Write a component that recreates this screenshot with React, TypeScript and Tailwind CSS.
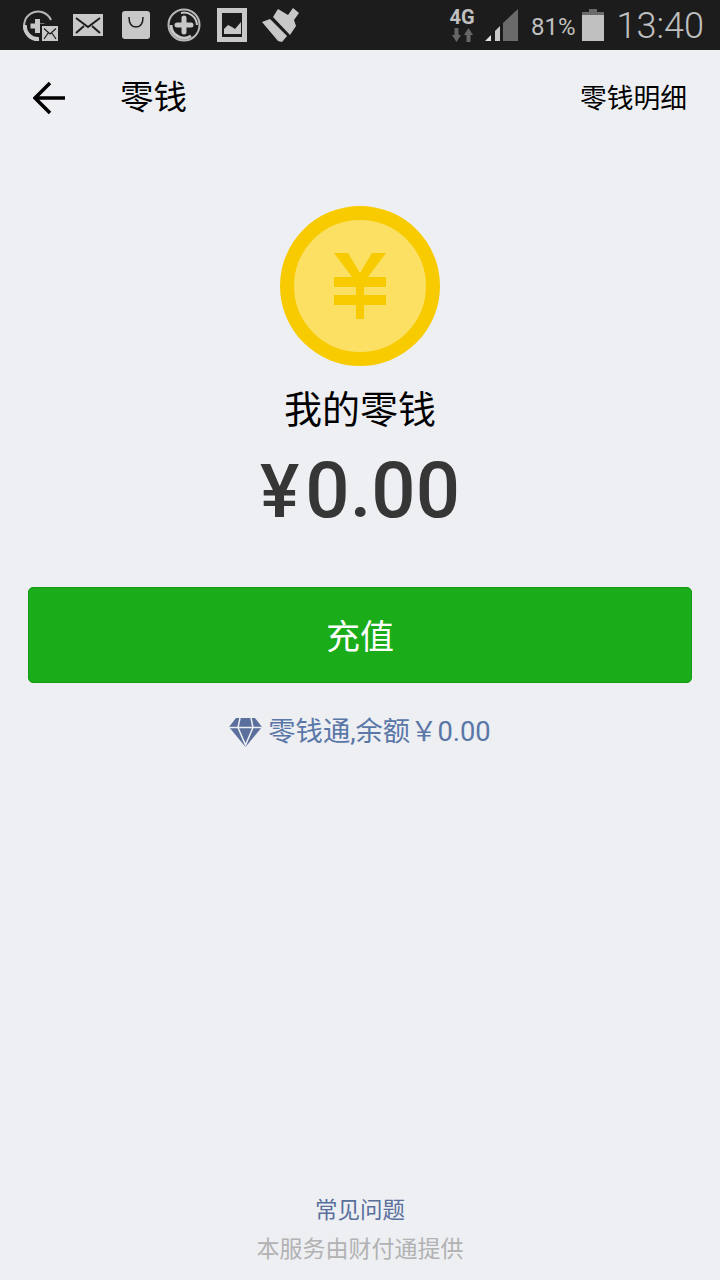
const cjk = "font-['Roboto','Noto_Sans_CJK_SC',sans-serif]"

function StatusIcons() {
 return (
  <div className="flex items-center">
   <svg className="ml-[22px] h-[34px] w-[37px]" viewBox="0 0 37 34">
    <path d="M5 26A14 14 0 1 1 29 12" fill="none" stroke="#b8b8b8" strokeWidth="2" />
    <path d="M3 17a13 13 0 0 0 14 14" fill="none" stroke="#c8c8c8" strokeWidth="4" />
    <path d="M15.500 11v14M8.500 18h14" fill="none" stroke="#c8c8c8" strokeWidth="5" />
    <rect x="18" y="16" width="19" height="18" fill="#1c1c1c" />
    <rect x="20" y="18" width="16" height="15" fill="#c8c8c8" />
    <path d="M22 20.500l6 5.500 6-5.500M22 31l4.500-6.500M34 31l-4.500-6.500" fill="none" stroke="#1c1c1c" strokeWidth="1.200" />
   </svg>
   <svg className="ml-[14px] h-[22px] w-[30px]" viewBox="0 0 30 22">
    <rect width="30" height="22" fill="#c8c8c8" />
    <path d="M3 4l12 9 12-9M3 19l8-7M27 19l-8-7" fill="none" stroke="#1c1c1c" strokeWidth="2" />
   </svg>
   <svg className="ml-[19px] h-[28px] w-[28px]" viewBox="0 0 28 28">
    <path d="M3 0h22a3 3 0 0 1 3 3v22a3 3 0 0 1-3 3H3a3 3 0 0 1-3-3V3a3 3 0 0 1 3-3z" fill="#c8c8c8" />
    <path d="M7 6c0 7 3 10 7 10s7-3 7-10" fill="none" stroke="#1c1c1c" strokeWidth="1.500" />
   </svg>
   <svg className="ml-[17px] h-[34px] w-[34px]" viewBox="0 0 34 34">
    <circle cx="17" cy="17" r="15.500" fill="none" stroke="#b8b8b8" strokeWidth="2" />
    <path d="M4 17a13 13 0 0 0 20 11" fill="none" stroke="#c8c8c8" strokeWidth="3" />
    <path d="M30 17A13 13 0 0 0 14 5" fill="none" stroke="#c8c8c8" strokeWidth="2" />
    <path d="M17 10v14M10 17h14" fill="none" stroke="#c8c8c8" strokeWidth="5" strokeLinecap="round" />
   </svg>
   <svg className="ml-[16px] h-[34px] w-[30px]" viewBox="0 0 30 34">
    <path fillRule="evenodd" d="M0 0h30v34H0zM5 5v24h20V5z" fill="#c8c8c8" />
    <path d="M7 26v-5l4-4 4 2 3 2 6-7v12z" fill="#c8c8c8" />
   </svg>
   <svg className="ml-[15px] h-[34px] w-[37px]" viewBox="0 0 37 34">
    <path d="M11 9L16 1l10 6 5-7 6 5-5 7 2 6-6 9z" fill="#c8c8c8" />
    <path d="M0 14l8-3 17 17-5 6-4-1z" fill="#c8c8c8" />
   </svg>
  </div>
 )
}

function StatusRight() {
 return (
  <div className="flex items-center">
   <div className="flex w-[26px] flex-col items-center">
    <span className="font-['Roboto',sans-serif] text-[20px] leading-[16px] font-bold text-[#c0c0c0]">4G</span>
    <svg className="mt-[3px] h-[14px] w-[21px]" viewBox="0 0 21 14">
     <path d="M2.500 0h4v7H9l-4.500 7L0 7h2.500z" fill="#666" />
     <path d="M14.500 14h4V7H21l-4.500-7L12 7h2.500z" fill="#666" />
    </svg>
   </div>
   <svg className="ml-[10px] h-[32px] w-[33px]" viewBox="0 0 33 32">
    <path d="M0 32l6-6v6z" fill="#e0e0e0" />
    <path d="M10 32V22l5-5v15z" fill="#c8c8c8" />
    <path d="M18 32V14L33 0v32z" fill="#6a6a6a" />
   </svg>
   <span className="mt-[3px] ml-[13px] font-['Roboto',sans-serif] text-[24px] leading-none text-[#c0c0c0]">81%</span>
   <svg className="ml-[6px] h-[32px] w-[22px]" viewBox="0 0 22 32">
    <path d="M7 0h8v3h7v29H0V3h7z" fill="#c0c0c0" />
    <rect x="0" y="3" width="22" height="3" fill="#6a6a6a" />
    <rect x="7" y="0" width="8" height="3" fill="#6a6a6a" />
   </svg>
   <span className="mt-[1px] ml-[13px] font-['Roboto',sans-serif] text-[36px] leading-none font-light text-[#c0c0c0]">13:40</span>
  </div>
 )
}

export default function App() {
 return (
  <div className={`flex h-[1280px] w-[720px] flex-col overflow-hidden bg-[#edeff3] ${cjk}`}>
   <div className="flex h-[50px] shrink-0 items-center justify-between bg-[#1c1c1c] pr-[16px]">
    <StatusIcons />
    <StatusRight />
   </div>

   <div className="flex h-[96px] shrink-0 items-center justify-between pr-[33px] pl-[33px]">
    <div className="flex items-center">
     <svg className="h-[34px] w-[34px]" viewBox="0 0 34 34">
      <path d="M32 17H3M17 2L2 17l15 15" fill="none" stroke="#000" strokeWidth="3.500" />
     </svg>
     <span className="ml-[53px] text-[33.500px] leading-none text-black">零钱</span>
    </div>
    <span className="pt-[3px] text-[26.750px] leading-none text-black">零钱明细</span>
   </div>

   <div className="flex flex-col items-center pt-[60px]">
    <div className="flex h-[160px] w-[160px] items-center justify-center rounded-full border-[14px] border-[#f8cb00] bg-[#fbe064]">
     <svg className="h-[66px] w-[52px]" viewBox="0 0 52 66">
      <path d="M0 0h14l12 20L38 0h14L34 24h18v10H30v8h22v10H30v14h-8V52H0V42h22v-8H0V24h18z" fill="#f8cb00" />
     </svg>
    </div>
    <div className="mt-[24px] text-[38px] leading-[40px] text-black">我的零钱</div>
    <div className="mt-[21px] flex h-[80px] items-baseline text-[78px] leading-[80px] font-medium text-[#363636]">
     <span className="mr-[6px] text-[74px]">¥</span>
     <span>0.00</span>
    </div>
   </div>

   <div className="mt-[56px] px-[28px]">
    <button className="h-[96px] w-full rounded-[5px] border border-[#179a16] bg-[#1aad19] pt-[4px] text-[34px] text-white">充值</button>
   </div>

   <div className="mt-[32px] flex items-center justify-center text-[27.300px] leading-[34px] text-[#5a77a8]">
    <svg className="mr-[6px] h-[30px] w-[33px]" viewBox="0 0 33 30">
     <path d="M7 1h19l7 9-16.500 20L0 10z" fill="#5a6f9c" />
     <path d="M0 10.500h33M9 10.500L16.500 28 24 10.500M11 1L9 10.500M22 1l2 9.500" fill="none" stroke="#edeff3" strokeWidth="1.500" />
    </svg>
    <span>零钱通,余额￥0.00</span>
   </div>

   <div className="mt-auto flex flex-col items-center pb-[15px]">
    <span className="text-[22.500px] leading-[30px] text-[#5a6f9c]">常见问题</span>
    <span className="mt-[10px] text-[23px] leading-[30px] text-[#b2b2b2]">本服务由财付通提供</span>
   </div>
  </div>
 )
}
